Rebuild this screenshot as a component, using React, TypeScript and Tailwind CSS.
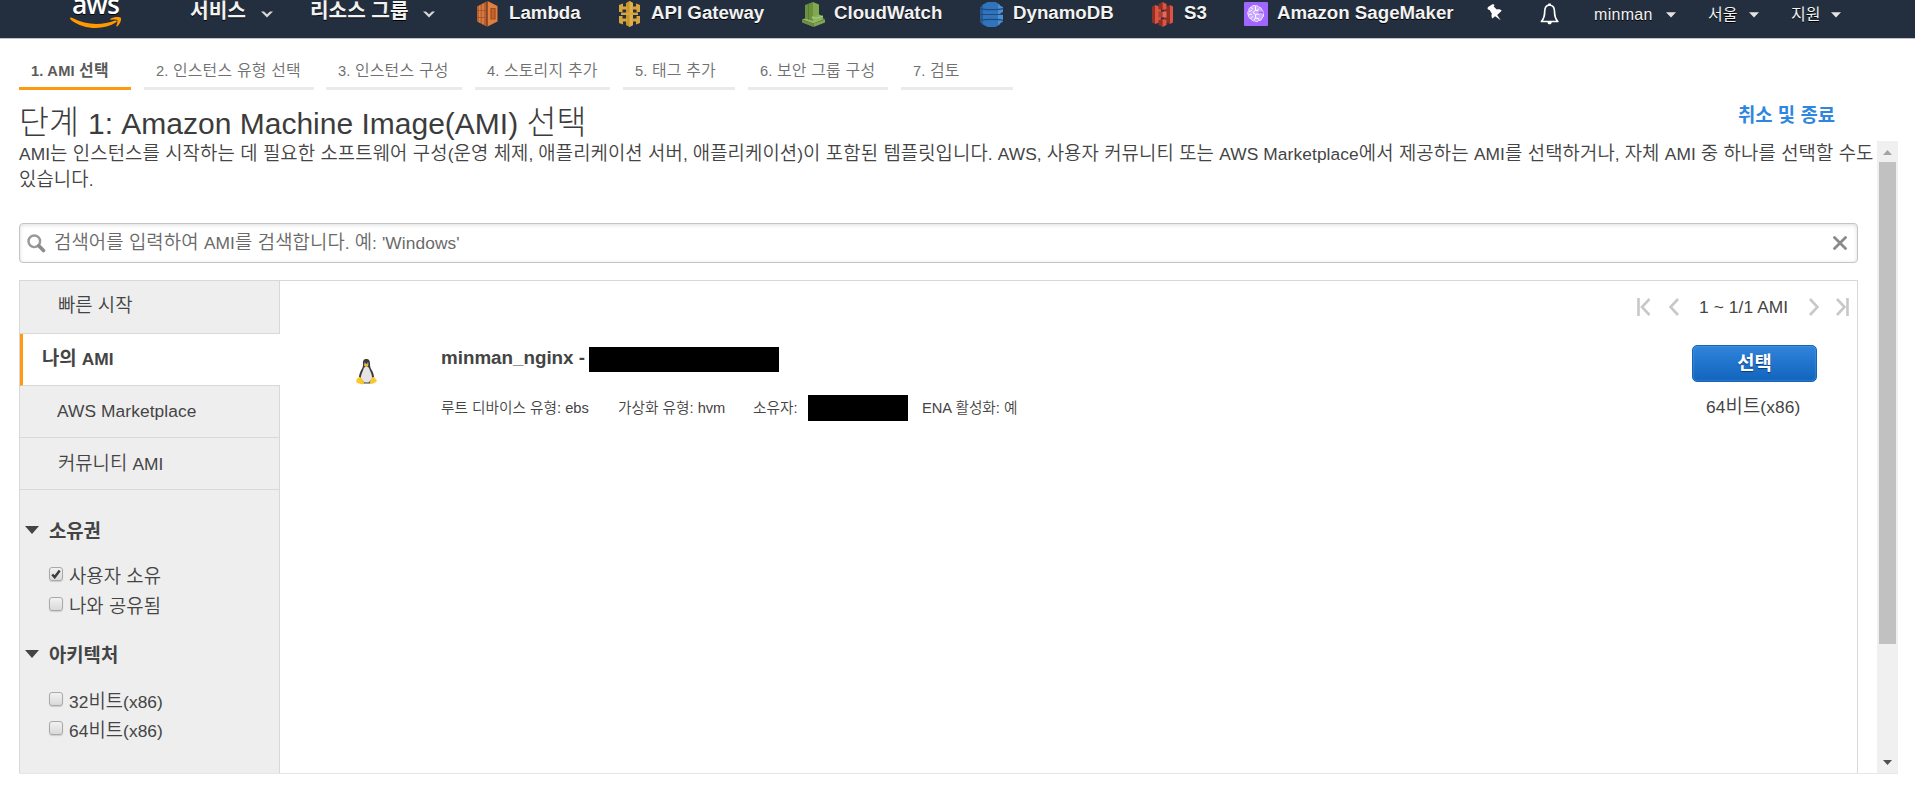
import React from "react";

const FONT = "font-['Liberation_Sans','Noto_Sans_CJK_KR',sans-serif]";

/* Sets Hangul runs slightly larger than the Latin text around them. */
function Ko({ children }: { children: string }) {
  const parts = children.split(/([가-힣]+(?:\s+[가-힣]+)*\s?)/);
  return (
    <>
      {parts.map((part, i) =>
        i % 2 === 1 ? (
          <span key={i} className="text-[1.086em] leading-none">{part}</span>
        ) : (
          part
        ),
      )}
    </>
  );
}

function Chevron() {
  return (
    <svg width="12" height="7" viewBox="0 0 12 7" className="shrink-0">
      <path d="M0 .5H3L6 3.200 9 .5h3L6 6.500Z" fill="#d5d5d5" />
    </svg>
  );
}

function Caret() {
  return (
    <svg width="10" height="6" viewBox="0 0 10 6" className="shrink-0">
      <path d="M0 .3h10L5 5.500Z" fill="#e4e4e4" />
    </svg>
  );
}

function AwsLogo() {
  return (
    <div className="flex h-[38px] w-[121px] shrink-0 flex-col items-start overflow-hidden pl-[71px]">
      <span className="-mt-[9px] ml-px h-[26px] font-['Open_Sans',sans-serif] text-[26.500px] leading-[27px] font-semibold tracking-[-1px] text-white">aws</span>
      <svg width="52" height="12" viewBox="0 0 52 12" className="-ml-px shrink-0">
        <path d="M0 1.600C.2 0 1.400.2 3 1.300 16 8.300 32 8.600 45 3.600c1.600-.6 2.600.6 1.200 1.700C34 13.500 14 13 1 3Z" fill="#f90" />
        <path d="M40.500 1.800C43.500-.2 49.600-.3 50.800.8c.9 1.600-.7 6.500-3.600 8.600-.6.4-1.200.1-.9-.7.800-2 1.600-4.700.9-5.600-.9-.9-3.700-.8-6-.4-.9.1-1.400-.4-.7-.9Z" fill="#f90" />
      </svg>
    </div>
  );
}

function LambdaIcon() {
  return (
    <svg width="21" height="26" viewBox="0 0 21 26">
      <path d="M0 5.500 9.500.5v25L0 20.500Z" fill="#b8612f" />
      <path d="M2.800 4.500v17.300M6 2.800v20.400" stroke="#de8048" strokeWidth="1.500" />
      <path d="M0 9.500h8.500M0 16.500h8.500" stroke="#a04d20" strokeWidth=".7" />
      <path d="m10.500 0 10 5v15.500l-10 5Z" fill="#e07f42" />
      <path d="M14 7.500h4v10.500h-4Z" fill="#c4622b" stroke="#a34a1b" strokeWidth="1.200" />
      <path d="M10.200.5v25" stroke="#a34a1b" strokeWidth="1" />
    </svg>
  );
}

function GatewayIcon() {
  return (
    <svg width="21" height="26" viewBox="0 0 21 26">
      <path d="m7 2 3.500-2L14 2v22l-3.500 2L7 24Z" fill="#c8962f" />
      <path d="m10.500 0 3.500 2v22l-3.500 2Z" fill="#e0b04a" />
      <path d="m0 4 4-1.500v3h4v3H3.500V11H0Zm0 11h3.500v2.500H8v3H4v3L0 22ZM21 4l-4-1.500v3h-4v3h4.500V11H21Zm0 11h-3.500v2.500H13v3h4v3l4-1.500Z" fill="#d6a53f" />
      <path d="M2 11.500h17v2.500H2Z" fill="#d6a53f" />
    </svg>
  );
}

function WatchIcon() {
  return (
    <svg width="23" height="25" viewBox="0 0 23 25">
      <path d="m0 17.500 11.500-4L23 17l-11.500 4.500Z" fill="#93b868" />
      <path d="m0 17.500 11.500 4V25L0 20.500Z" fill="#6b9040" />
      <path d="m11.500 21.500 11.500-4v3L11.500 25Z" fill="#7fa850" />
      <path d="M3 3 11 0v19l-8-2.500Z" fill="#6b9040" />
      <path d="M6.500 1.800v16" stroke="#547a2c" strokeWidth=".8" />
      <path d="m11 0 6 2.500v11L11 18Z" fill="#7fa94c" />
      <path d="m10 14.500 7-2 4 1.500v2l-7 2.500-4-1.500Z" fill="#88b356" />
      <path d="m10 15 4 1.500 7-2.500" fill="none" stroke="#b9d499" strokeWidth=".8" />
    </svg>
  );
}

function DynamoIcon() {
  return (
    <svg width="23" height="25" viewBox="0 0 23 25">
      <path d="M3 2.500 7.500 0h8L20 2.500v20L15.500 25h-8L3 22.500Z" fill="#2f74bd" />
      <path d="M0 5.500 3 2v21l-3-3Z" fill="#255d9c" />
      <path d="M18 2.500 23 5v5l-3 1.500 3 1.500v6.500l-5 3.500Z" fill="#4c8fd4" />
      <path d="M0 6.500c4 1.500 19 1.500 23 0M0 12.500h23M0 18.500c4-1.500 19-1.500 23 0" stroke="#214a7a" strokeWidth="1.200" fill="none" />
    </svg>
  );
}

function S3Icon() {
  return (
    <svg width="21" height="25" viewBox="0 0 21 25">
      <path d="m0 4.500 3-1.500v19l-3-1.500Z" fill="#8c3123" />
      <path d="m3 3 6 2v15l-6 2Z" fill="#dd5443" />
      <path d="m21 4.500-3-1.500v19l3-1.500Z" fill="#e05243" />
      <path d="m18 3-6 2v15l6 2Z" fill="#8c3123" />
      <path d="m6.500 2 4-2v8l-4-1Zm0 21 4 2v-8l-4 1Z" fill="#8c3123" />
      <path d="m14.500 2-4-2v8l4-1Zm0 21-4 2v-8l4 1Z" fill="#e05243" />
      <path d="M6.500 9.500h4v6h-4Z" fill="#b23d2e" />
      <path d="M10.500 9.500h4v6h-4Z" fill="#e8695b" />
    </svg>
  );
}

function SageIcon() {
  return (
    <svg width="24" height="24" viewBox="0 0 24 24">
      <rect width="24" height="24" rx="1" fill="#a166ff" />
      <path d="M11.500 3.800c-2-.8-3.800.1-4.300 1.500-1.700.1-2.700 1.700-2.300 3.200-1.400 1.300-1.400 3.200-.6 4.500-.2 1.800.8 3.300 2.500 3.600.6 1.900 2.300 2.500 3.700 2.200 1.300 1.200 3.200 1.100 4.200-.2 1.800.2 3.300-1.100 3.300-2.700 1.500-1 1.900-2.700 1.200-4.100.5-1.600-.1-3.200-1.400-3.900-.2-1.900-1.600-2.900-3-2.700-.7-1.300-2.100-1.800-3.300-1.400Z" fill="#c9a6ff" stroke="#f3eaff" strokeWidth="1" />
      <path d="M7.200 5.300c.2 1 .8 1.600 1.800 1.800M5 9c1.300.3 2.200 0 3-1M4.500 13c1-.9 2.100-1 3.300-.5M7 16.500c.2-1.200 1-2 2.200-2.200M11.500 4v4l3 1M11.500 8 9 10.500l2.500 2 3.500-.5M15 12l3.500-1.500M11.500 12.500V16l-1.500 2M11.500 16l3 .5L15 18M15 6.500l-1.500 1.500" fill="none" stroke="#fff" strokeWidth="1" />
      <path d="M14.500 9.500h5v2h-5Z" fill="#a166ff" />
    </svg>
  );
}

function PinIcon() {
  return (
    <svg width="16" height="17" viewBox="0 0 16 17">
      <path d="M1 5.500C.2 4.600.4 3.600 1.500 2.800L5 .6C6.300-.1 7.300.2 7.500 1.200l-.8 1.200 3 3.200c1.700-.6 3.700-.2 5 1.200L10.200 11l3.500 5.300-5.600-4L5.500 14.500C4.300 13 4.200 11.400 4.900 9.800L2.600 5.900Z" fill="#fff" />
    </svg>
  );
}

function BellIcon() {
  return (
    <svg width="20" height="22" viewBox="0 0 20 22">
      <path d="M9.500 2C6 2.300 4.700 5 4.700 8.200c0 5-.9 7.700-3.300 10.300h16.400c-2.400-2.600-3.300-5.300-3.300-10.300C14.500 5 13 2.300 9.500 2Z" fill="none" stroke="#fff" strokeWidth="1.700" strokeLinejoin="round" />
      <path d="M7.500 19h4.200c0 1.600-.7 2.300-2.100 2.300S7.500 20.600 7.500 19ZM8.300.6h2.600V2.500H8.300Z" fill="#fff" />
    </svg>
  );
}

type Service = { label: string; box: string; gap: string; icon: React.ReactNode };

const services: Service[] = [
  { label: "Lambda", box: "w-[142px]", gap: "w-[32px]", icon: <LambdaIcon /> },
  { label: "API Gateway", box: "w-[183px]", gap: "w-[32px]", icon: <GatewayIcon /> },
  { label: "CloudWatch", box: "w-[178px]", gap: "w-[32px]", icon: <WatchIcon /> },
  { label: "DynamoDB", box: "w-[172px]", gap: "w-[33px]", icon: <DynamoIcon /> },
  { label: "S3", box: "w-[92px]", gap: "w-[32px]", icon: <S3Icon /> },
  { label: "Amazon SageMaker", box: "w-[243px]", gap: "w-[33px]", icon: <SageIcon /> },
];

function TopBar() {
  return (
    <header className="flex h-[39px] items-start overflow-hidden border-b border-[#c2c0ca] bg-[#232f3e] text-[#f2f2f2] [text-shadow:0_1px_0_#000]">
      <AwsLogo />
      <div className="flex h-[28px] w-[189px] shrink-0 items-center pt-px pl-[69px]">
        <span className="-mt-[7px] w-[71px] shrink-0 text-[20.300px] leading-[20px] font-bold">서비스</span>
        <Chevron />
      </div>
      <div className="flex h-[28px] w-[167px] shrink-0 items-center pt-px">
        <span className="-mt-[7px] w-[113px] shrink-0 text-[20.200px] leading-[20px] font-bold">리소스 그룹</span>
        <Chevron />
      </div>
      {services.map((s) => (
        <div key={s.label} className={`flex h-[28px] shrink-0 items-center ${s.box}`}>
          <span className={`shrink-0 ${s.gap}`}>{s.icon}</span>
          <span className="-mt-[3px] text-[18.700px] leading-[20px] font-bold whitespace-nowrap">{s.label}</span>
        </div>
      ))}
      <div className="flex h-[24px] w-[53px] shrink-0 items-center"><PinIcon /></div>
      <div className="flex h-[28px] w-[54px] shrink-0 items-center"><BellIcon /></div>
      <div className="flex h-[29px] w-[114px] shrink-0 items-center">
        <span className="w-[72px] shrink-0 text-[16px] tracking-[.3px]">minman</span>
        <Caret />
      </div>
      <div className="flex h-[29px] w-[83px] shrink-0 items-center">
        <span className="w-[41px] shrink-0 text-[16px] leading-[20px]">서울</span>
        <Caret />
      </div>
      <div className="flex h-[29px] shrink-0 items-center">
        <span className="w-[40px] shrink-0 text-[16px] leading-[20px]">지원</span>
        <Caret />
      </div>
    </header>
  );
}

const steps = [
  { label: "1. AMI 선택", cls: "w-[112px] mr-[13px] border-[#ff9914] font-bold text-[#5a5a5a]" },
  { label: "2. 인스턴스 유형 선택", cls: "w-[170px] mr-[12px] border-[#eaeaea] font-[350] text-[#707070]" },
  { label: "3. 인스턴스 구성", cls: "w-[136px] mr-[13px] border-[#eaeaea] font-[350] text-[#707070]" },
  { label: "4. 스토리지 추가", cls: "w-[135px] mr-[13px] border-[#eaeaea] font-[350] text-[#707070]" },
  { label: "5. 태그 추가", cls: "w-[112px] mr-[13px] border-[#eaeaea] font-[350] text-[#707070]" },
  { label: "6. 보안 그룹 구성", cls: "w-[140px] mr-[13px] border-[#eaeaea] font-[350] text-[#707070]" },
  { label: "7. 검토", cls: "w-[112px] border-[#eaeaea] font-[350] text-[#707070]" },
];

function Steps() {
  return (
    <nav className="flex h-[51px] pl-[19px]">
      {steps.map((s) => (
        <div key={s.label} className={`h-[51px] shrink-0 border-b-3 pt-[21px] pl-[12px] text-[14.670px] leading-[22px] tracking-[.2px] whitespace-nowrap ${s.cls}`}>
          <Ko>{s.label}</Ko>
        </div>
      ))}
    </nav>
  );
}

function SearchBox() {
  return (
    <div className="flex h-[40px] w-[1839px] items-center rounded-[4px] border border-[#c4c4c4] pl-[8px] shadow-[inset_0_1px_4px_#ddd]">
      <svg width="19" height="19" viewBox="0 0 19 19" className="-ml-px shrink-0">
        <circle cx="7.300" cy="7.300" r="5.800" fill="none" stroke="#999" strokeWidth="2.400" />
        <path d="m11.800 11.800 4.700 4.700" stroke="#8c8c8c" strokeWidth="3.600" strokeLinecap="round" />
      </svg>
      <span className="-mt-px ml-[8px] grow text-[17.330px] leading-[24px] font-[350] tracking-[.1px] whitespace-nowrap text-[#6a6a6a]"><Ko>검색어를 입력하여 AMI를 검색합니다. 예: 'Windows'</Ko></span>
      <svg width="14" height="14" viewBox="0 0 14 14" className="mr-[10px] shrink-0">
        <path d="m1.500 1.500 11 11m0-11-11 11" stroke="#8a8a8a" strokeWidth="2.800" strokeLinecap="round" />
      </svg>
    </div>
  );
}

function Check({ checked = false, label, cls }: { checked?: boolean; label: string; cls: string }) {
  return (
    <div className={`flex h-[24px] items-start pl-[29px] ${cls}`}>
      <span className="mr-[6px] flex h-[14px] w-[14px] shrink-0 items-center justify-center rounded-[3px] border border-[#a9a9a9] bg-linear-to-b from-[#f2f2f2] to-[#d9d9d9] shadow-[0_1px_1px_#ccc]">
        {checked && (
          <svg width="10" height="10" viewBox="0 0 10 10">
            <path d="m1.200 5.500 2.500 2.700L8.700 1.500" stroke="#3c3c3c" strokeWidth="2.500" fill="none" />
          </svg>
        )}
      </span>
      <span className="-mt-px leading-[22px] font-[350] tracking-[.05px] whitespace-nowrap"><Ko>{label}</Ko></span>
    </div>
  );
}

function GroupTitle({ children, cls }: { children: string; cls: string }) {
  return (
    <div className={`flex h-[24px] items-start pt-[4px] pl-[5px] font-bold ${cls}`}>
      <svg width="14" height="8" viewBox="0 0 14 8" className="mt-px mr-[10px] shrink-0">
        <path d="M0 0h14L7 8Z" fill="#444" />
      </svg>
      <span className="-mt-[5px] leading-[24px]"><Ko>{children}</Ko></span>
    </div>
  );
}

function Sidebar() {
  return (
    <aside className="flex w-[260px] shrink-0 flex-col border-r border-[#d8d8d8] bg-[#eee]">
      <div className="h-[53px] border-b border-[#d8d8d8] pt-[13px] pl-[38px] leading-[24px] font-[350]"><Ko>빠른 시작</Ko></div>
      <div className="-mr-px h-[52px] border-b border-l-3 border-b-[#d8d8d8] border-l-[#ff9914] bg-white pt-[13px] pl-[19px] leading-[24px] font-bold"><Ko>나의 AMI</Ko></div>
      <div className="h-[52px] border-b border-[#d8d8d8] pt-[13px] pl-[37px] leading-[24px] tracking-[.1px]">AWS Marketplace</div>
      <div className="h-[52px] border-b border-[#d8d8d8] pt-[14px] pl-[38px] leading-[24px] font-[350]"><Ko>커뮤니티 AMI</Ko></div>
      <GroupTitle cls="mt-[31px]">소유권</GroupTitle>
      <Check checked label="사용자 소유" cls="mt-[22px]" />
      <Check label="나와 공유됨" cls="mt-[6px]" />
      <GroupTitle cls="mt-[24px]">아키텍처</GroupTitle>
      <Check label="32비트(x86)" cls="mt-[23px]" />
      <Check label="64비트(x86)" cls="mt-[5px]" />
    </aside>
  );
}

function Tux() {
  return (
    <svg width="21" height="26" viewBox="0 0 21 26" className="mt-[78px] shrink-0">
      <path d="M10.500 0C7.500 0 6.700 2 7 5c.2 3-.8 4.500-2.300 7C3.500 14.500 2.800 17 3 20l4 4.500h7.500l3.500-4.500c.3-3-.6-6-2-8.500C14.600 9.300 14 8 14 5c.1-3-.8-5-3.500-5Z" fill="#3a3a3a" />
      <path d="M10.500 7.500c-1.800 0-2.800 1.500-3.500 4-1 3-2.500 5-2 8l3.500 4h4l3.500-3.500c.4-3-.8-6-2-8.500-.8-2.500-1.700-4-3.500-4Z" fill="#e4e4e4" />
      <path d="M7.700 5.700c1.300-1.400 3.500-1.400 5 0-.7 1.700-1.500 2.100-2.500 2.100s-2-.7-2.500-2.100Z" fill="#f0b93a" />
      <circle cx="9" cy="4.200" r=".8" fill="#bbb" />
      <circle cx="11.800" cy="4.200" r=".8" fill="#bbb" />
      <path d="M3 18c1.900-.3 3 1.500 5 5 .4 1.500-1 2.700-2.500 2.300l-4-1.300C-.3 23.400.4 22.300.6 21.200.4 19.500 1.700 19.500 3 18Zm15 0c-1.800-.2-2.500 1-3 2.500-.8 2-2 3.500-.5 4.200 2 .7 4-.9 5.500-1.700 1.200-.7 1-1.500.2-2.500Z" fill="#fcc72b" />
    </svg>
  );
}

function Pager() {
  return (
    <div className="flex h-[18px] items-center text-[17.330px]">
      <svg width="14" height="18" viewBox="0 0 14 18" className="mr-[18px]">
        <path d="M1.500 0v18M12.500 1 5 9l7.500 8" stroke="#c8c8c8" strokeWidth="2.600" fill="none" />
      </svg>
      <svg width="10" height="18" viewBox="0 0 10 18" className="mr-[20px]">
        <path d="M9 1 1.500 9 9 17" stroke="#c8c8c8" strokeWidth="2.600" fill="none" />
      </svg>
      <span className="w-[110px] pt-px tracking-[.1px] whitespace-nowrap">1 ~ 1/1 AMI</span>
      <svg width="10" height="18" viewBox="0 0 10 18" className="mr-[17px]">
        <path d="m1 1 7.500 8L1 17" stroke="#c8c8c8" strokeWidth="2.600" fill="none" />
      </svg>
      <svg width="13" height="18" viewBox="0 0 13 18">
        <path d="M11.500 0v18M1 1l7.500 8L1 17" stroke="#c8c8c8" strokeWidth="2.600" fill="none" />
      </svg>
    </div>
  );
}

function AmiList() {
  return (
    <div className="flex grow items-start pl-[76px]">
      <Tux />
      <div className="flex w-[1195px] shrink-0 flex-col pt-[66px] pl-[64px]">
        <div className="flex h-[25px] items-start">
          <span className="w-[148px] shrink-0 pt-px text-[18.800px] leading-[20px] font-bold whitespace-nowrap">minman_nginx -</span>
          <span className="h-[25px] w-[190px] bg-black" />
        </div>
        <div className="mt-[23px] flex h-[26px] items-center text-[14.670px] font-[350] whitespace-nowrap">
          <span className="w-[177px]">루트 디바이스 유형: ebs</span>
          <span className="w-[135px]">가상화 유형: hvm</span>
          <span className="w-[55px]">소유자:</span>
          <span className="h-[26px] w-[100px] bg-black" />
          <span className="ml-[14px]">ENA 활성화: 예</span>
        </div>
      </div>
      <div className="flex grow flex-col items-start pt-[17px]">
        <div className="pl-[65px]"><Pager /></div>
        <button className="mt-[29px] ml-[120px] h-[37px] w-[125px] rounded-[5px] border border-[#1464b7] bg-linear-to-b from-[#2f84dc] to-[#1164bc] text-[18.800px] leading-[20px] font-bold text-white shadow-[inset_0_0_2px_#6aa9ea] [text-shadow:0_1px_1px_#0a3d78]">선택</button>
        <span className="mt-[13px] ml-[134px] leading-[24px] font-[350] tracking-[.1px] whitespace-nowrap"><Ko>64비트(x86)</Ko></span>
      </div>
    </div>
  );
}

function ScrollBar() {
  return (
    <div className="flex h-[632px] w-[21px] shrink-0 flex-col items-center bg-[#f0f0f0]">
      <svg width="9" height="5" viewBox="0 0 9 5" className="mt-[9px] mb-[7px] shrink-0">
        <path d="M4.500 0 9 5H0Z" fill="#a3a3a3" />
      </svg>
      <div className="h-[482px] w-[17px] shrink-0 bg-[#c1c1c1]" />
      <svg width="9" height="5" viewBox="0 0 9 5" className="mt-[116px] shrink-0">
        <path d="M0 0h9L4.500 5Z" fill="#505050" />
      </svg>
    </div>
  );
}

export default function App() {
  return (
    <div lang="ko" className={`h-[797px] w-[1915px] overflow-hidden bg-white text-[17.330px] text-[#444] ${FONT}`}>
      <TopBar />
      <Steps />
      <div className="flex h-[51px] items-start justify-between pl-[19px]">
        <h1 className="pt-[16px] text-[30px] leading-[36px] font-light whitespace-nowrap text-[#3c3c3c]"><Ko>단계 1: Amazon Machine Image(AMI) 선택</Ko></h1>
        <a className="mt-[14px] mr-[80px] leading-[24px] font-bold text-[#2f86de]"><Ko>취소 및 종료</Ko></a>
      </div>
      <div className="ml-[19px] flex h-[633px] w-[1879px] border-b border-[#e6e6e6]">
        <main className="flex w-[1858px] shrink-0 flex-col">
          <p className="h-[82px] pt-px leading-[25.700px] font-[350] tracking-[.1px] whitespace-nowrap">
            <Ko>AMI는 인스턴스를 시작하는 데 필요한 소프트웨어 구성(운영 체제, 애플리케이션 서버, 애플리케이션)이 포함된 템플릿입니다. AWS, 사용자 커뮤니티 또는 AWS Marketplace에서 제공하는 AMI를 선택하거나, 자체 AMI 중 하나를 선택할 수도</Ko>
            <br />
            <Ko>있습니다.</Ko>
          </p>
          <SearchBox />
          <section className="mt-[17px] flex h-[493px] w-[1839px] border border-b-0 border-[#d8d8d8]">
            <Sidebar />
            <AmiList />
          </section>
        </main>
        <ScrollBar />
      </div>
    </div>
  );
}
